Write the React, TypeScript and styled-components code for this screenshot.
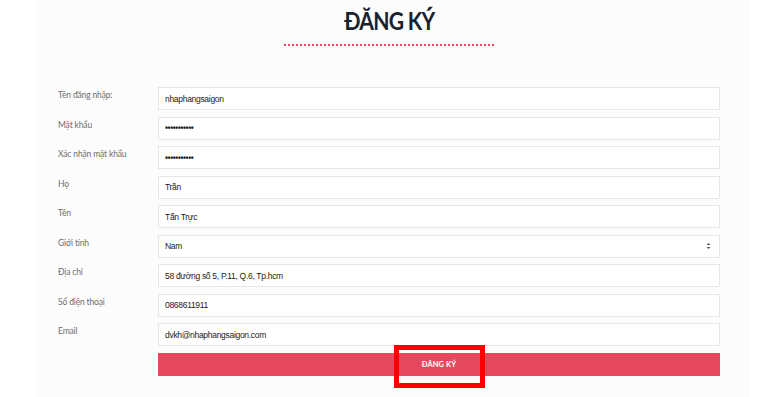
import React from "react";
import styled, { createGlobalStyle } from "styled-components";

const Global = createGlobalStyle`
  html, body { margin: 0; padding: 0; background: #ffffff; }
  body { font-family: Lato, "Open Sans", sans-serif; }
`;

const Page = styled.div`
  width: 769px;
  height: 397px;
  overflow: hidden;
  background: #ffffff;
`;

const Panel = styled.div`
  margin-left: 37px;
  width: 713px;
  height: 397px;
  background: #fcfcfc;
  box-sizing: border-box;
  padding: 6px 30px 0 21px;
  position: relative;
`;

const Header = styled.div`
  display: flex;
  flex-direction: column;
  align-items: center;
`;

const Title = styled.h1`
  margin: 0;
  font-family: Lato, sans-serif;
  font-weight: 700;
  font-size: 24px;
  letter-spacing: -0.8px;
  line-height: 30px;
  color: #18212c;
  transform: scaleX(0.88);
`;

const Divider = styled.div`
  width: 210px;
  margin-top: 8px;
  border-top: 2px dotted #e64a5f;
`;

const Form = styled.form`
  margin-top: 41px;
  display: flex;
  flex-direction: column;
  gap: 6.5px;
`;

const Row = styled.div`
  display: flex;
  align-items: flex-start;
`;

const Label = styled.label`
  width: 100px;
  flex: none;
  padding-top: 2px;
  font-family: Lato, sans-serif;
  font-size: 8.5px;
  letter-spacing: -0.15px;
  line-height: 12px;
  color: #6e6e6e;
`;

const Field = styled.div`
  flex: 1;
  height: 23px;
  box-sizing: border-box;
  border: 1px solid #e6e6e6;
  background: #ffffff;
  display: flex;
  align-items: center;
  justify-content: space-between;
  padding: 0 8px 0 6px;
  font-family: "Liberation Sans", Arial, sans-serif;
  font-size: 8.5px;
  color: #1a1a1a;
`;

const Value = styled.span<{ $dots?: boolean }>`
  letter-spacing: ${(p) => (p.$dots ? "-0.4px" : "-0.3px")};
  font-weight: ${(p) => (p.$dots ? 700 : 400)};
`;

const SubmitRow = styled.div`
  display: flex;
  padding-left: 100px;
  margin-top: 0.5px;
`;

const Submit = styled.button`
  flex: 1;
  height: 23px;
  border: none;
  background: #e6495e;
  color: #ffffff;
  font-family: Lato, sans-serif;
  font-weight: 700;
  font-size: 7.5px;
  letter-spacing: 0.1px;
  cursor: pointer;
`;

const Highlight = styled.div`
  position: absolute;
  left: 357px;
  top: 345px;
  width: 91px;
  height: 43px;
  box-sizing: border-box;
  border: 5px solid #ff0000;
  pointer-events: none;
`;

const Arrows = () => (
  <svg width="5" height="8" viewBox="0 0 5 8">
    <path d="M0.5 3 L2.5 1 L4.5 3 Z" fill="#555" />
    <path d="M0.5 5 L2.5 7 L4.5 5 Z" fill="#555" />
  </svg>
);

const rows: { label: string; value: string; dots?: boolean; select?: boolean }[] = [
  { label: "Tên đăng nhập:", value: "nhaphangsaigon" },
  { label: "Mật khẩu", value: "•••••••••••", dots: true },
  { label: "Xác nhận mật khẩu", value: "•••••••••••", dots: true },
  { label: "Họ", value: "Trần" },
  { label: "Tên", value: "Tấn Trực" },
  { label: "Giới tính", value: "Nam", select: true },
  { label: "Địa chỉ", value: "58 đường số 5, P.11, Q.6, Tp.hcm" },
  { label: "Số điện thoại", value: "0868611911" },
  { label: "Email", value: "dvkh@nhaphangsaigon.com" },
];

export default function App() {
  return (
    <Page>
      <Global />
      <Panel>
        <Header>
          <Title>ĐĂNG KÝ</Title>
          <Divider />
        </Header>
        <Form onSubmit={(e) => e.preventDefault()}>
          {rows.map((r) => (
            <Row key={r.label}>
              <Label>{r.label}</Label>
              <Field>
                <Value $dots={r.dots}>{r.value}</Value>
                {r.select && <Arrows />}
              </Field>
            </Row>
          ))}
          <SubmitRow>
            <Submit type="submit">ĐĂNG KÝ</Submit>
          </SubmitRow>
        </Form>
        <Highlight />
      </Panel>
    </Page>
  );
}
